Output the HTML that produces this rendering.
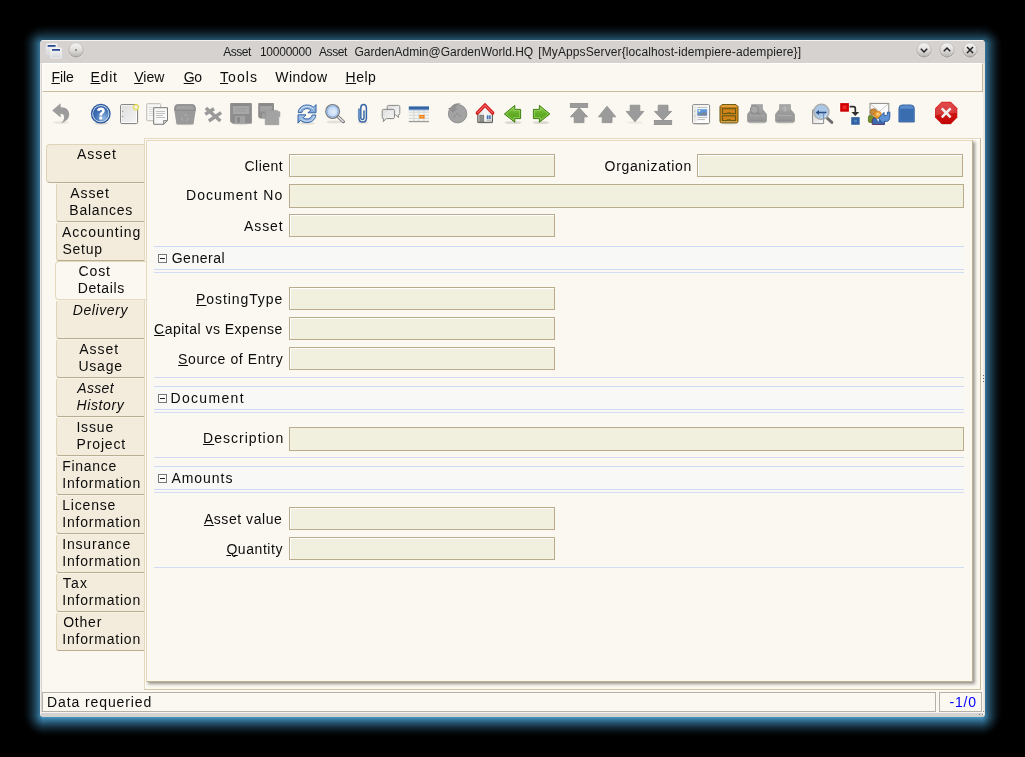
<!DOCTYPE html>
<html><head><meta charset="utf-8">
<style>
*{box-sizing:border-box;margin:0;padding:0}
html,body{width:1025px;height:757px;background:#000;overflow:hidden}
body{position:relative;font-family:"Liberation Sans",sans-serif;font-size:14px;color:#0c0c0c}
.abs{position:absolute}
/* glow */
.g{position:absolute}
#gl{left:22px;top:44px;width:18px;height:669px;background:linear-gradient(to left,rgb(53,117,154) 0px,rgb(48,106,140) 1px,rgb(43,96,126) 2px,rgb(39,86,113) 3px,rgb(35,76,100) 4px,rgb(30,67,89) 5px,rgb(27,59,77) 6px,rgb(23,51,67) 7px,rgb(20,43,57) 8px,rgb(16,36,47) 9px,rgb(13,29,39) 10px,rgb(11,23,31) 11px,rgb(8,18,24) 12px,rgb(6,13,17) 13px,rgb(4,9,12) 14px,rgb(3,6,7) 15px,rgb(1,3,4) 16px,rgb(0,1,1) 17px,rgb(0,0,0) 18px)}
#gr{left:985px;top:44px;width:18px;height:669px;background:linear-gradient(to right,rgb(53,117,154) 0px,rgb(48,106,140) 1px,rgb(43,96,126) 2px,rgb(39,86,113) 3px,rgb(35,76,100) 4px,rgb(30,67,89) 5px,rgb(27,59,77) 6px,rgb(23,51,67) 7px,rgb(20,43,57) 8px,rgb(16,36,47) 9px,rgb(13,29,39) 10px,rgb(11,23,31) 11px,rgb(8,18,24) 12px,rgb(6,13,17) 13px,rgb(4,9,12) 14px,rgb(3,6,7) 15px,rgb(1,3,4) 16px,rgb(0,1,1) 17px,rgb(0,0,0) 18px)}
#gt{left:44px;top:24px;width:937px;height:16px;background:linear-gradient(to top,rgb(37,82,108) 0px,rgb(33,74,97) 1px,rgb(30,66,87) 2px,rgb(27,59,77) 3px,rgb(23,52,68) 4px,rgb(20,45,59) 5px,rgb(17,39,51) 6px,rgb(15,33,43) 7px,rgb(12,27,36) 8px,rgb(10,22,29) 9px,rgb(8,17,22) 10px,rgb(6,13,17) 11px,rgb(4,9,12) 12px,rgb(3,6,7) 13px,rgb(1,3,4) 14px,rgb(0,1,1) 15px,rgb(0,0,0) 16px)}
#gb{left:44px;top:717px;width:937px;height:20px;background:linear-gradient(to bottom,rgb(69,152,200) 0px,rgb(63,139,183) 1px,rgb(58,127,167) 2px,rgb(52,115,152) 3px,rgb(47,104,137) 4px,rgb(42,93,123) 5px,rgb(38,83,109) 6px,rgb(33,73,96) 7px,rgb(29,64,84) 8px,rgb(25,55,72) 9px,rgb(21,47,62) 10px,rgb(18,39,52) 11px,rgb(15,32,42) 12px,rgb(12,26,34) 13px,rgb(9,20,26) 14px,rgb(7,14,19) 15px,rgb(4,10,13) 16px,rgb(3,6,8) 17px,rgb(1,3,4) 18px,rgb(0,1,1) 19px,rgb(0,0,0) 20px)}
#gtl{left:22px;top:24px;width:22px;height:20px;background:conic-gradient(from 270deg at 100% 100%,rgba(0,0,0,0) 0deg,rgba(0,0,0,.3) 90deg,rgba(0,0,0,0) 90deg),radial-gradient(ellipse 22px 20px at 100% 100%,rgb(53,117,154) 0%,rgb(53,117,154) 18.18%,rgb(48,106,140) 22.73%,rgb(43,96,126) 27.27%,rgb(39,86,113) 31.82%,rgb(35,76,100) 36.36%,rgb(30,67,89) 40.91%,rgb(27,59,77) 45.45%,rgb(23,51,67) 50.00%,rgb(20,43,57) 54.55%,rgb(16,36,47) 59.09%,rgb(13,29,39) 63.64%,rgb(11,23,31) 68.18%,rgb(8,18,24) 72.73%,rgb(6,13,17) 77.27%,rgb(4,9,12) 81.82%,rgb(3,6,7) 86.36%,rgb(1,3,4) 90.91%,rgb(0,1,1) 95.45%,rgb(0,0,0) 100.00%)}
#gtr{left:981px;top:24px;width:22px;height:20px;background:conic-gradient(from 0deg at 0% 100%,rgba(0,0,0,.3) 0deg,rgba(0,0,0,0) 90deg),radial-gradient(ellipse 22px 20px at 0% 100%,rgb(53,117,154) 0%,rgb(53,117,154) 18.18%,rgb(48,106,140) 22.73%,rgb(43,96,126) 27.27%,rgb(39,86,113) 31.82%,rgb(35,76,100) 36.36%,rgb(30,67,89) 40.91%,rgb(27,59,77) 45.45%,rgb(23,51,67) 50.00%,rgb(20,43,57) 54.55%,rgb(16,36,47) 59.09%,rgb(13,29,39) 63.64%,rgb(11,23,31) 68.18%,rgb(8,18,24) 72.73%,rgb(6,13,17) 77.27%,rgb(4,9,12) 81.82%,rgb(3,6,7) 86.36%,rgb(1,3,4) 90.91%,rgb(0,1,1) 95.45%,rgb(0,0,0) 100.00%)}
#gbl{left:22px;top:713px;width:22px;height:24px;background:conic-gradient(from 180deg at 100% 0%,rgba(0,0,0,0) 0deg,rgba(0,0,0,.23) 90deg,rgba(0,0,0,0) 90deg),radial-gradient(ellipse 22px 24px at 100% 0%,rgb(68,152,200) 0%,rgb(69,152,200) 18.18%,rgb(63,138,182) 22.73%,rgb(56,125,164) 27.27%,rgb(51,112,147) 31.82%,rgb(45,99,131) 36.36%,rgb(40,87,115) 40.91%,rgb(35,76,100) 45.45%,rgb(30,66,87) 50.00%,rgb(25,56,74) 54.55%,rgb(21,47,62) 59.09%,rgb(17,38,50) 63.64%,rgb(14,31,40) 68.18%,rgb(11,23,31) 72.73%,rgb(8,17,23) 77.27%,rgb(5,12,16) 81.82%,rgb(3,7,10) 86.36%,rgb(2,4,5) 90.91%,rgb(1,1,1) 95.45%,rgb(0,0,0) 100.00%)}
#gbr{left:981px;top:713px;width:22px;height:24px;background:conic-gradient(from 90deg at 0% 0%,rgba(0,0,0,.23) 0deg,rgba(0,0,0,0) 90deg),radial-gradient(ellipse 22px 24px at 0% 0%,rgb(68,152,200) 0%,rgb(69,152,200) 18.18%,rgb(63,138,182) 22.73%,rgb(56,125,164) 27.27%,rgb(51,112,147) 31.82%,rgb(45,99,131) 36.36%,rgb(40,87,115) 40.91%,rgb(35,76,100) 45.45%,rgb(30,66,87) 50.00%,rgb(25,56,74) 54.55%,rgb(21,47,62) 59.09%,rgb(17,38,50) 63.64%,rgb(14,31,40) 68.18%,rgb(11,23,31) 72.73%,rgb(8,17,23) 77.27%,rgb(5,12,16) 81.82%,rgb(3,7,10) 86.36%,rgb(2,4,5) 90.91%,rgb(1,1,1) 95.45%,rgb(0,0,0) 100.00%)}


#win{position:absolute;left:40px;top:40px;width:945px;height:677px;background:linear-gradient(to right,#efedea 0,#efedea 1px,#d6d2cf 1px,#d6d2cf 943px,#efece8 943px,#e4e0dc 945px);border-radius:4px 4px 3px 3px;overflow:hidden}
#title{position:absolute;left:0;top:0;width:945px;height:23px;background:#d6d2cf;border-top:1px solid #f4f2f0}
#content{position:absolute;left:2px;top:23px;width:941px;height:649px;background:#fbf8f1}
#menubar{position:absolute;left:0;top:0;width:941px;height:29px;border-top:1px solid #fff;border-left:1px solid #fff;border-bottom:1px solid #c9bb9b;border-right:1px solid #c4b696}
.t{position:absolute;font-size:14px;line-height:20px;white-space:pre}
.t u{text-decoration:underline;text-decoration-thickness:1px;text-underline-offset:1px}
.fld{position:absolute;height:23px;background:#f1efde;border:1px solid #b9ab8c;box-shadow:inset 1px 1px 0 #fff}
.sec{position:absolute;left:154px;width:810px;height:24px;background:#f8f8f7;border-top:1px solid #cfd9f5;border-bottom:1px solid #cfd9f5}
.ln{position:absolute;left:154px;width:810px;height:1px;background:#d3dcf5}
.box{position:absolute;left:158px;width:9px;height:9px;border:1px solid #777;background:#fdfdfd}
.box:after{content:"";position:absolute;left:1px;top:3px;width:5px;height:1px;background:#222}
.tab{position:absolute;left:56px;width:88px;height:39px;background:#f3ecdc;border-left:1px solid #e0d4b6;border-top:1px solid #f8f2e6;border-bottom:1px solid #b9ad92;border-radius:3px 0 0 3px}
.tab.sel{background:#fbf8f1;left:55px;width:91px;border:1px solid #e3d8bc;border-right:none;border-radius:4px 0 0 4px}
.ic{position:absolute;top:102px;width:24px;height:24px;overflow:visible}
</style></head><body>
<div class="g" id="gl"></div><div class="g" id="gr"></div><div class="g" id="gt"></div><div class="g" id="gb"></div><div class="g" id="gtl"></div><div class="g" id="gtr"></div><div class="g" id="gbl"></div><div class="g" id="gbr"></div>
<div id="win">
 <div id="title"></div>
 <div id="content"><div id="menubar"></div></div>
 <div style="position:absolute;left:1px;top:672px;width:943px;height:1px;background:#f6f4f2"></div>
</div>
<div id="page" class="abs" style="left:0;top:0;width:1025px;height:757px;will-change:transform">
<div class="abs" style="left:144px;top:138px;width:837px;height:552px;border:1px solid #e6d9bd;border-right-color:#c6b999;border-bottom-color:#d2c6a6;box-shadow:inset 1px 1px 0 #fff"></div>
<div class="abs" style="left:983px;top:375px;width:1px;height:1px;background:#666;box-shadow:0 3px 0 #666,0 6px 0 #666"></div>
<div class="abs" style="left:979px;top:714px;width:1px;height:1px;background:#888;box-shadow:3px 0 0 #888,4px -3px 0 #888"></div>
<div class="abs" id="panel" style="left:146px;top:140px;width:827px;height:542px;border:1px solid #e6d9bd;border-right-color:#bdb092;border-bottom-color:#bdb092;background:#fbf8f1;box-shadow:2px 2px 3px rgba(70,68,60,.55)"></div>
<div class="tab" style="left:46px;top:144px;width:98px;height:39px;border-top-color:#e0d4b6;border-radius:4px 0 0 4px"></div>
<div class="tab" style="top:183px"></div>
<div class="tab" style="top:222px"></div>
<div class="tab sel" style="top:261px"></div>
<div class="tab" style="top:300px"></div>
<div class="tab" style="top:339px"></div>
<div class="tab" style="top:378px"></div>
<div class="tab" style="top:417px"></div>
<div class="tab" style="top:456px"></div>
<div class="tab" style="top:495px"></div>
<div class="tab" style="top:534px"></div>
<div class="tab" style="top:573px"></div>
<div class="tab" style="top:612px"></div>
<div class="fld" style="left:289px;top:154px;width:266px"></div>
<div class="fld" style="left:697px;top:154px;width:266px"></div>
<div class="fld" style="left:289px;top:184px;width:675px;height:24px;box-shadow:none"></div>
<div class="fld" style="left:289px;top:214px;width:266px"></div>
<div class="sec" style="top:246px"></div>
<div class="ln" style="top:272px"></div>
<div class="box" style="top:254px"></div>
<div class="fld" style="left:289px;top:287px;width:266px"></div>
<div class="fld" style="left:289px;top:317px;width:266px"></div>
<div class="fld" style="left:289px;top:347px;width:266px"></div>
<div class="ln" style="top:377px"></div>
<div class="sec" style="top:386px"></div>
<div class="ln" style="top:412px"></div>
<div class="box" style="top:394px"></div>
<div class="fld" style="left:289px;top:427px;width:675px;height:24px;box-shadow:none"></div>
<div class="ln" style="top:457px"></div>
<div class="sec" style="top:466px"></div>
<div class="ln" style="top:492px"></div>
<div class="box" style="top:474px"></div>
<div class="fld" style="left:289px;top:507px;width:266px"></div>
<div class="fld" style="left:289px;top:537px;width:266px"></div>
<div class="ln" style="top:567px"></div>
<div class="abs" style="left:42px;top:692px;width:894px;height:20px;border:1px solid #b4b1a9;background:#fbf8f1"></div>
<div class="abs" style="left:939px;top:692px;width:43px;height:20px;border:1px solid #b4b1a9;background:#fbf8f1"></div>

<svg width="0" height="0" style="position:absolute"><defs><linearGradient id="tb" x1="0" y1="0" x2="0" y2="1"><stop offset="0" stop-color="#f6f5f4"/><stop offset=".5" stop-color="#e0dedc"/><stop offset="1" stop-color="#b4b1ae"/></linearGradient>
<linearGradient id="tbs" x1="0" y1="0" x2="0" y2="1"><stop offset="0" stop-color="#c9c6c3"/><stop offset="1" stop-color="#8f8b88"/></linearGradient>
<linearGradient id="aw" x1="0" y1="0" x2="0" y2="1"><stop offset="0" stop-color="#fafafa"/><stop offset="1" stop-color="#d4d6da"/></linearGradient></defs></svg><svg class="abs" style="left:67.4px;top:41.4px;width:18px;height:18px;overflow:visible" viewBox="-9 -9 18 18">
<circle cx="0" cy=".7" r="7.5" fill="#fff" opacity=".5"/>
<circle cx="0" cy="0" r="7.15" fill="url(#tb)" stroke="url(#tbs)" stroke-width=".8"/>
<circle cx="0" cy="0" r=".75" fill="#222"/></svg><svg class="abs" style="left:915.3px;top:41.3px;width:18px;height:18px;overflow:visible" viewBox="-9 -9 18 18">
<circle cx="0" cy=".7" r="7.5" fill="#fff" opacity=".5"/>
<circle cx="0" cy="0" r="7.15" fill="url(#tb)" stroke="url(#tbs)" stroke-width=".8"/>
<path d="M-3.2 -1.2 L0 2 L3.2 -1.2" fill="none" stroke="#222" stroke-width="1.5"/></svg><svg class="abs" style="left:938.4px;top:41.3px;width:18px;height:18px;overflow:visible" viewBox="-9 -9 18 18">
<circle cx="0" cy=".7" r="7.5" fill="#fff" opacity=".5"/>
<circle cx="0" cy="0" r="7.15" fill="url(#tb)" stroke="url(#tbs)" stroke-width=".8"/>
<path d="M-3.2 1.2 L0 -2 L3.2 1.2" fill="none" stroke="#222" stroke-width="1.5"/></svg><svg class="abs" style="left:961.4px;top:41.3px;width:18px;height:18px;overflow:visible" viewBox="-9 -9 18 18">
<circle cx="0" cy=".7" r="7.5" fill="#fff" opacity=".5"/>
<circle cx="0" cy="0" r="7.15" fill="url(#tb)" stroke="url(#tbs)" stroke-width=".8"/>
<path d="M-3 -3 L3 3 M3 -3 L-3 3" fill="none" stroke="#222" stroke-width="1.5"/></svg><svg class="abs" style="left:45px;top:43px;width:18px;height:16px" viewBox="0 0 18 16">
<rect x="1.3" y=".8" width="11" height="10.4" rx="1" fill="url(#aw)" stroke="#e8e8e8" stroke-width=".8"/>
<rect x="2.6" y="2" width="8" height="1.8" fill="#2c4c94"/>
<rect x="5.7" y="4.8" width="10.6" height="10.4" rx="1" fill="url(#aw)" stroke="#f0f0f0" stroke-width=".9"/>
<rect x="7" y="6" width="8" height="1.8" fill="#2c4c94"/>
</svg>
<svg class="ic" style="left:49px" viewBox="0 0 24 24"><ellipse cx="12" cy="20.5" rx="8" ry="1.6" fill="#000" opacity=".06"/>
<path d="M3.2 8.6 L11.6 1.2 L11.6 5.4 C16.8 5 20.4 8.2 20.2 12.8 C20 17 16.6 19.9 11.8 21.4 C14.4 19.2 15.6 16.6 15 14.2 C14.5 12.3 13.3 11.6 11.6 11.7 L11.6 15.6 Z" fill="#9c9c9c"/></svg>
<svg class="ic" style="left:89px" viewBox="0 0 24 24"><defs><radialGradient id="hg" cx=".7" cy=".8" r=".9"><stop offset="0" stop-color="#8fb6e2"/><stop offset=".6" stop-color="#3f70b4"/><stop offset="1" stop-color="#2f5ea6"/></radialGradient></defs><ellipse cx="12" cy="21.3" rx="7" ry="1.2" fill="#000" opacity=".15"/>
<circle cx="11.8" cy="11.7" r="9.9" fill="#2c5aa0"/>
<circle cx="11.8" cy="11.7" r="8.5" fill="#f4f7fb"/>
<circle cx="11.8" cy="11.7" r="7.8" fill="url(#hg)"/>
<path d="M8 8.6 C8 4.6 15.8 4.4 15.8 8.6 C15.8 11.2 13.2 11.4 13.2 13.4 L10.4 13.4 C10.4 10.6 13 10.4 13 8.8 C13 7.6 10.8 7.6 10.8 9 Z M10.4 14.6 H13.2 V17.4 H10.4 Z" fill="#fff"/></svg>
<svg class="ic" style="left:117px" viewBox="0 0 24 24"><defs><linearGradient id="ng" x1="0" y1="0" x2="1" y2="1"><stop offset="0" stop-color="#dedede"/><stop offset="1" stop-color="#f4f4f4"/></linearGradient></defs><rect x="3.6" y="2.6" width="17" height="19" rx="1.2" fill="#fff" stroke="#7b7b78" stroke-width="1"/>
<rect x="5" y="4" width="14.2" height="16.2" fill="url(#ng)"/>
<circle cx="5.6" cy="9.4" r=".7" fill="#9a9a98"/><circle cx="5.6" cy="14.4" r=".7" fill="#9a9a98"/>
<circle cx="19" cy="5.3" r="2.5" fill="#f4f4ea" fill-opacity=".8" stroke="#e8dc4e" stroke-opacity=".85" stroke-width="1.4"/></svg>
<svg class="ic" style="left:145px" viewBox="0 0 24 24"><rect x="1.7" y="1.7" width="14" height="17" rx=".8" fill="#f6f6f4" stroke="#bcbcb8" stroke-width="1"/>
<path d="M4 5.5h9M4 7.5h9M4 9.5h9M4 11.5h9M4 13.5h5" stroke="#dcdcda" stroke-width="1"/>
<path d="M8.7 5.7 H22.5 V18.5 L18.5 22.3 H8.7 Z" fill="#f8f8f8" stroke="#7a7a78" stroke-width="1" stroke-linejoin="round"/>
<path d="M11 9.5h9M11 11.5h9M11 13.5h7M11 15.5h9" stroke="#c2c2c0" stroke-width="1"/>
<path d="M22.5 18.5 H18.5 V22.3 Z" fill="#d0d0ce" stroke="#7a7a78" stroke-width=".8" stroke-linejoin="round"/></svg>
<svg class="ic" style="left:173px" viewBox="0 0 24 24"><ellipse cx="12" cy="22.3" rx="9.5" ry="1" fill="#000" opacity=".08"/>
<path d="M1.2 7.4 Q1 2.2 5.4 2.2 H18.6 Q23 2.2 22.8 7.4 L20.7 21.2 Q20.5 22.5 19.2 22.5 H4.8 Q3.5 22.5 3.3 21.2 Z" fill="#9a9a9a"/>
<path d="M1.3 7.6 Q1.1 2.2 5.4 2.2 H18.6 Q22.9 2.2 22.7 7.6 L22.5 9 H1.5 Z" fill="#8e8e8e"/>
<path d="M3 7.6 Q3 3.8 5.6 3.8 H18.4 Q21 3.8 21 7.6 Z" fill="#a2a2a2"/>
<circle cx="12" cy="15.8" r="3.1" fill="none" stroke="#a9a9a9" stroke-width="1.3" stroke-dasharray="4.2 2.3"/></svg>
<svg class="ic" style="left:201px" viewBox="0 0 24 24"><path d="M4.9 5.9 L19.4 18.9 M13 6.7 L4.2 12.3 M20.2 10.7 L7.8 19" stroke="#9a9a9a" stroke-width="3.4" stroke-linecap="butt" fill="none"/></svg>
<svg class="ic" style="left:229px" viewBox="0 0 24 24"><ellipse cx="12" cy="22.2" rx="7" ry="1" fill="#000" opacity=".08"/>
<path d="M2.2 1 H21.8 Q22.9 1 22.9 2.1 V20.7 Q22.9 21.8 21.8 21.8 H3.6 L1.1 19.4 V2.1 Q1.1 1 2.2 1 Z" fill="#8d8d8d"/>
<rect x="3.9" y="3.6" width="16.3" height="8.4" fill="#a6a6a6"/>
<path d="M3.9 3.3h16.3" stroke="#848484" stroke-width="1"/>
<path d="M6.5 6.5h11M6.5 9h11" stroke="#9c9c9c" stroke-width="1"/>
<rect x="6.1" y="14" width="10" height="7.8" fill="#a2a2a2"/>
<rect x="8.3" y="15.2" width="2.5" height="5.4" fill="#858585"/></svg>
<svg class="ic" style="left:257px" viewBox="0 0 24 24"><path d="M2 1 H16.2 Q17 1 17 1.8 V16.6 H3 L1.2 15 V1.8 Q1.2 1 2 1 Z" fill="#8d8d8d"/>
<rect x="3.2" y="3.6" width="11.6" height="6" fill="#a3a3a3"/>
<path d="M3.2 3.2h11.6" stroke="#838383" stroke-width="1"/>
<rect x="5" y="11.5" width="4" height="5" fill="#a0a0a0"/>
<path d="M8.2 8.4 H20.3 L21.8 9.8 H22.9 V14.6 H21.8 V22.7 H8.2 Z" fill="#a3a3a3" stroke="#969696" stroke-width=".6"/></svg>
<svg class="ic" style="left:295px" viewBox="0 0 24 24"><defs><linearGradient id="rf" x1="0" y1="0" x2="0" y2="1"><stop offset="0" stop-color="#a5c2e7"/><stop offset="1" stop-color="#7ea5d8"/></linearGradient></defs><ellipse cx="12" cy="21.3" rx="8" ry="1.2" fill="#000" opacity=".1"/>
<path d="M3.2 10.6 C3.6 5.6 8 2.8 12.6 3 C15 3.1 17 4 18.6 5.2 L21 2.6 V10.8 H13 L15.8 8 C14.6 7 13.4 6.6 12 6.6 C9.6 6.6 7.6 8 6.8 10.6 Z" fill="url(#rf)" stroke="#3465a4" stroke-width="1" stroke-linejoin="round"/>
<path d="M20.8 13 C20.4 18 16 20.8 11.4 20.6 C9 20.5 7 19.6 5.4 18.4 L3 21.2 V12.8 H11 L8.2 15.6 C9.4 16.6 10.6 17 12 17 C14.4 17 16.4 15.6 17.2 13 Z" fill="url(#rf)" stroke="#3465a4" stroke-width="1" stroke-linejoin="round"/>
<path d="M4.6 9.6 C5.4 6.4 8.6 4.2 12.4 4.4 C14.6 4.5 16.6 5.4 18.4 7 M19.4 14 C18.6 17.2 15.4 19.4 11.6 19.2 C9.4 19.1 7.4 18.2 5.6 16.6" fill="none" stroke="#d6e4f5" stroke-width=".9"/></svg>
<svg class="ic" style="left:323px" viewBox="0 0 24 24"><defs><radialGradient id="fg" cx=".6" cy=".55" r=".7"><stop offset="0" stop-color="#e4eefa"/><stop offset="1" stop-color="#b4cff0"/></radialGradient></defs><ellipse cx="11" cy="20" rx="7.5" ry="1.6" fill="#000" opacity=".09"/>
<path d="M14.6 14.4 L20.3 19.6" stroke="#6f6f6f" stroke-width="3.3" stroke-linecap="round"/>
<path d="M15 14.8 L20.1 19.4" stroke="#e6e6e6" stroke-width="1.5" stroke-linecap="round"/>
<circle cx="9.6" cy="9.4" r="6.9" fill="#c3d8f1" stroke="#7a7a7a" stroke-width="1.2"/>
<circle cx="9.6" cy="9.4" r="5.5" fill="url(#fg)" stroke="#7daae6" stroke-width=".9"/></svg>
<svg class="ic" style="left:351px" viewBox="0 0 24 24"><ellipse cx="12" cy="20.8" rx="6" ry=".8" fill="#000" opacity=".12"/>
<path d="M8 7 V16.5 Q8 20 11.6 20 Q15.4 20 15.4 16.5 V6 Q15.4 2.6 12.6 2.6 Q9.8 2.6 9.8 6 V15.6 Q9.8 17.6 11.4 17.6 Q13 17.6 13 15.6 V9" fill="none" stroke="#3a68a8" stroke-width="1.5" stroke-linecap="round"/>
<path d="M8 8 V16" stroke="#6c93c8" stroke-width="2.2"/></svg>
<svg class="ic" style="left:379px" viewBox="0 0 24 24"><defs><linearGradient id="cg" x1="0" y1="0" x2="1" y2="1"><stop offset="0" stop-color="#dcdcdc"/><stop offset="1" stop-color="#fafafa"/></linearGradient></defs><path d="M9.4 3.4 H19.6 Q20.8 3.4 20.8 4.6 V11.6 Q20.8 12.8 19.6 12.8 H19 L19.6 15.6 L16.6 12.8 H9.4 Q8.2 12.8 8.2 11.6 V4.6 Q8.2 3.4 9.4 3.4 Z" fill="url(#cg)" stroke="#8a8a88" stroke-width="1" stroke-linejoin="round"/>
<path d="M4.4 7.4 H14.2 Q15.4 7.4 15.4 8.6 V15.4 Q15.4 16.6 14.2 16.6 H7.4 L4.2 19.6 L4.8 16.6 H4.4 Q3.2 16.6 3.2 15.4 V8.6 Q3.2 7.4 4.4 7.4 Z" fill="url(#cg)" stroke="#858583" stroke-width="1" stroke-linejoin="round"/></svg>
<svg class="ic" style="left:407px" viewBox="0 0 24 24"><rect x="1.8" y="4.6" width="20.2" height="15.2" fill="#f6f6f4"/>
<path d="M1.8 10.2h20.2M1.8 13.2h20.2M1.8 16.4h20.2M6.9 8v11.5M11.9 8v11.5M17 8v11.5" stroke="#d2d2ce" stroke-width=".9"/>
<rect x="1.8" y="4.4" width="20.2" height="3.4" fill="#3465a4"/>
<rect x="1.8" y="7.6" width="20.2" height=".8" fill="#8fb0dc"/>
<rect x="1.8" y="18.9" width="20.2" height="1.3" fill="#9a9a96"/>
<rect x="12.2" y="13" width="5.4" height="3.4" rx="1" fill="#f57900"/>
<rect x="13.4" y="14.2" width="3" height="1" fill="#fcc98a"/></svg>
<svg class="ic" style="left:445px" viewBox="0 0 24 24"><circle cx="12.6" cy="11.7" r="9.2" fill="#a3a3a3" stroke="#8f8f8f" stroke-width="1"/>
<path d="M2.8 6 L6.4 6.3 C6.6 3.4 9 1.5 13 1.3 L16 1.5 C12.8 2.4 10.8 3.8 10.6 6.4 L13 6.6 L7.8 10.8 Z" fill="#919191"/>
<path d="M8 15.5 L12.4 11.3 L16.1 14.8" fill="none" stroke="#8a8a8a" stroke-width="1"/></svg>
<svg class="ic" style="left:473px" viewBox="0 0 24 24"><defs><linearGradient id="hm" x1="0" y1="0" x2="1" y2="0"><stop offset="0" stop-color="#d8d8d6"/><stop offset=".5" stop-color="#f8f8f8"/><stop offset="1" stop-color="#e2e2e0"/></linearGradient></defs><ellipse cx="12" cy="20.8" rx="8.5" ry="1" fill="#000" opacity=".12"/>
<path d="M4.8 11 L12 4.4 L19.4 11 V20.3 H4.8 Z" fill="url(#hm)" stroke="#4c4e4a" stroke-width="1" stroke-linejoin="round"/>
<rect x="6.8" y="13.2" width="4" height="6.6" fill="#8d8f8a" stroke="#6a6c68" stroke-width=".6"/>
<rect x="13.4" y="13" width="4.6" height="4.4" fill="#3b6cb4" stroke="#eeeeec" stroke-width=".7"/>
<path d="M15.7 13v4.4" stroke="#dfe8f4" stroke-width=".7"/>
<path d="M13.4 18.3h4.6" stroke="#a8a8a4" stroke-width=".8"/>
<path d="M4.3 11 L12 3.1 L19.7 11" fill="none" stroke="#d41616" stroke-width="3.3" stroke-linecap="round" stroke-linejoin="miter"/>
<path d="M4.6 10.7 L12 3.2 L19.4 10.7" fill="none" stroke="#f57272" stroke-width="1.1" stroke-linecap="round"/></svg>
<svg class="ic" style="left:501px" viewBox="0 0 24 24"><defs><linearGradient id="gr1" x1="0" y1="0" x2="0" y2="1"><stop offset="0" stop-color="#8fd04e"/><stop offset=".5" stop-color="#62ad26"/><stop offset="1" stop-color="#56a01e"/></linearGradient></defs><ellipse cx="12" cy="20.6" rx="8.5" ry="1.5" fill="#000" opacity=".13"/>
<path d="M3.4 12 L13.8 3.4 V7.4 H19.6 V16.6 H13.8 V20.2 Z" fill="url(#gr1)" stroke="#3c7d12" stroke-width="1" stroke-linejoin="round"/>
<path d="M5 12 L12.8 5.6 V8.4 H18.6 V15.6 H12.8 V18.2 Z" fill="none" stroke="#a6dc6a" stroke-width=".8" opacity=".8"/></svg>
<svg class="ic" style="left:529px" viewBox="0 0 24 24"><ellipse cx="12" cy="20.6" rx="8.5" ry="1.5" fill="#000" opacity=".13"/>
<path d="M20.8 12 L10.4 3.4 V7.4 H4.4 V16.6 H10.4 V20.2 Z" fill="url(#gr1)" stroke="#3c7d12" stroke-width="1" stroke-linejoin="round"/>
<path d="M19.2 12 L11.4 5.6 V8.4 H5.4 V15.6 H11.4 V18.2 Z" fill="none" stroke="#a6dc6a" stroke-width=".8" opacity=".8"/></svg>
<svg class="ic" style="left:567px" viewBox="0 0 24 24"><ellipse cx="12" cy="21" rx="7" ry="1" fill="#000" opacity=".06"/><rect x="3.3" y="1.4" width="17.4" height="4" fill="#9b9b9b" stroke="#8d8d8d" stroke-width=".8"/><path d="M12 5.6 L20.6 14.8 H17 V20.4 H7.2 V14.8 H3.4 Z" fill="#9b9b9b" stroke="#8d8d8d" stroke-width=".8"/></svg>
<svg class="ic" style="left:595px" viewBox="0 0 24 24"><ellipse cx="12" cy="21" rx="7" ry="1" fill="#000" opacity=".06"/><path d="M12 4.2 L20.8 14.8 H17 V20.4 H7.2 V14.8 H3.4 Z" fill="#9b9b9b" stroke="#8d8d8d" stroke-width=".8"/></svg>
<svg class="ic" style="left:623px" viewBox="0 0 24 24"><ellipse cx="12" cy="20.6" rx="8" ry="1.2" fill="#000" opacity=".06"/><path d="M12 19.8 L20.8 9.4 H16.8 V3.2 H7.2 V9.4 H3.2 Z" fill="#9b9b9b" stroke="#8d8d8d" stroke-width=".8"/></svg>
<svg class="ic" style="left:651px" viewBox="0 0 24 24"><path d="M12 18.2 L20.6 9.4 H17 V3.2 H7.2 V9.4 H3.4 Z" fill="#9b9b9b" stroke="#8d8d8d" stroke-width=".8"/><rect x="3.3" y="18.4" width="17.4" height="4.2" fill="#9b9b9b" stroke="#8d8d8d" stroke-width=".8"/></svg>
<svg class="ic" style="left:689px" viewBox="0 0 24 24"><ellipse cx="12" cy="22" rx="8" ry=".9" fill="#000" opacity=".12"/>
<rect x="3.6" y="2.6" width="17" height="19" rx="1.2" fill="#fdfdfd" stroke="#878785" stroke-width="1"/>
<rect x="5" y="4" width="2.6" height="16.2" fill="#e8e8e6"/>
<circle cx="5.7" cy="9" r=".6" fill="#999"/><circle cx="5.7" cy="14" r=".6" fill="#999"/>
<path d="M8.4 5.4h9.8M8.4 15.4h9.8M8.4 17.6h7.6" stroke="#b9b9b7" stroke-width="1"/>
<rect x="8.4" y="7.2" width="9.6" height="6.4" fill="#5b97db" stroke="#7fb0e8" stroke-width=".5"/>
<path d="M8.6 13.4 V11.6 L11 11.4 L13.8 11 L15.6 9.2 L16.6 11 L17.8 10.6 V13.4 Z" fill="#7b8794"/>
<circle cx="10.4" cy="8.8" r="1" fill="#fdf6c0"/></svg>
<svg class="ic" style="left:717px" viewBox="0 0 24 24"><ellipse cx="12" cy="21.6" rx="8.5" ry="1" fill="#000" opacity=".15"/>
<path d="M5 2.6 H19 L21 4.6 V19.2 Q21 20.8 19.4 20.8 H4.6 Q3 20.8 3 19.2 V4.6 Z" fill="#d4871a" stroke="#62540f" stroke-width="1" stroke-linejoin="round"/>
<path d="M5.2 3.4 H18.8 L20.1 4.8 H3.9 Z" fill="#eeb353"/>
<path d="M3.9 5.4 H20.1" stroke="#b56f10" stroke-width=".8"/>
<path d="M3.9 19.7 H20.1" stroke="#efc070" stroke-width=".9"/>
<rect x="5.5" y="6.7" width="13" height="4.9" fill="#d2841a" stroke="#665712" stroke-width="1.1"/>
<rect x="5.5" y="13.8" width="13" height="4.8" fill="#d2841a" stroke="#665712" stroke-width="1.1"/>
<rect x="10" y="10.2" width="4" height="1.4" fill="#7d6512"/>
<rect x="10" y="17.2" width="4" height="1.4" fill="#7d6512"/></svg>
<svg class="ic" style="left:745px" viewBox="0 0 24 24"><ellipse cx="12" cy="21.4" rx="8" ry="1" fill="#000" opacity=".07"/>
<path d="M6.2 2.2 H17.8 V7.2 L21.4 11.4 Q21.9 12 21.9 12.8 V18.6 Q21.9 20.8 19.7 20.8 H4.3 Q2.1 20.8 2.1 18.6 V12.8 Q2.1 12 2.6 11.4 L6.2 7.2 Z" fill="#9a9a9a"/>
<rect x="7" y="3" width="10" height="6.4" fill="#a5a5a5"/>
<path d="M4.6 13.6 H19.4" stroke="#aaaaaa" stroke-width="1.2" stroke-dasharray="3 1"/>
<path d="M4.4 18.2 H19.6" stroke="#8c8c8c" stroke-width="1"/>
<circle cx="9.4" cy="7.6" r="3.9" fill="#a8a8a8" stroke="#8c8c8c" stroke-width="1.2"/>
<path d="M12.2 10.4 L14.8 12.8" stroke="#8c8c8c" stroke-width="1.6"/></svg>
<svg class="ic" style="left:773px" viewBox="0 0 24 24"><ellipse cx="12" cy="21.4" rx="8" ry="1" fill="#000" opacity=".07"/>
<path d="M6.2 2.2 H17.8 V7.2 L21.4 11.4 Q21.9 12 21.9 12.8 V18.6 Q21.9 20.8 19.7 20.8 H4.3 Q2.1 20.8 2.1 18.6 V12.8 Q2.1 12 2.6 11.4 L6.2 7.2 Z" fill="#9a9a9a"/>
<rect x="7" y="3" width="10" height="6.4" fill="#a5a5a5"/>
<path d="M12 3.8 L15 7 H13 V9.4 H11 V7 H9 Z" fill="#b4b4b4"/>
<path d="M4.6 13.6 H19.4" stroke="#aaaaaa" stroke-width="1.2"/>
<path d="M4.4 18.2 H19.6" stroke="#8c8c8c" stroke-width="1"/></svg>
<svg class="ic" style="left:811px" viewBox="0 0 24 24"><defs><linearGradient id="zp" x1="0" y1="0" x2="1" y2="1"><stop offset="0" stop-color="#d4d4d2"/><stop offset="1" stop-color="#fbfbfb"/></linearGradient></defs><path d="M1.6 8.2 Q1.6 7.6 2.2 7.6 H12.6 V21.6 H1.6 Z" fill="url(#zp)" stroke="#8a8a88" stroke-width="1"/>
<path d="M16 16 L20.8 20.4" stroke="#6e6e6e" stroke-width="3" stroke-linecap="round"/>
<circle cx="10.4" cy="9.8" r="7.6" fill="#abc7e7" stroke="#adadab" stroke-width="1.4"/>
<path d="M10 15.5 A 6.5 6.5 0 0 0 16.5 11" fill="none" stroke="#d4e2f4" stroke-width="1.2" opacity=".8"/>
<path d="M4.6 10.5 L8 8 V9.8 H15.4 V11.2 H8 V13 Z" fill="#2b4c80"/>
<path d="M12.6 10.6 V17" stroke="#5a7cae" stroke-width=".8"/></svg>
<svg class="ic" style="left:839px" viewBox="0 0 24 24"><rect x=".6" y=".6" width="9.8" height="9.6" fill="#fff"/>
<rect x="1.2" y="1.1" width="8.7" height="8.6" fill="#cc0000"/>
<rect x="3.4" y="3.3" width="4.3" height="4.2" fill="#ef2929" stroke="#e01010" stroke-width=".8"/>
<rect x="11.6" y="14.6" width="9.6" height="8.8" fill="#fff"/>
<rect x="12.2" y="15.1" width="8.5" height="7.7" fill="#3465a4"/>
<rect x="14.4" y="17.2" width="4.1" height="3.6" fill="#4f83c6" stroke="#2f5c98" stroke-width=".8"/>
<path d="M10.6 4.6 H14.4 Q16.3 4.6 16.3 6.6 V10.4" fill="none" stroke="#2e2e2e" stroke-width="1.7"/>
<path d="M12.4 10 H20.2 L16.3 14 Z" fill="#2e2e2e"/></svg>
<svg class="ic" style="left:867px" viewBox="0 0 24 24"><rect x="3" y="1.4" width="18.8" height="14" fill="#fbfbfb" stroke="#8a8a88" stroke-width="1"/>
<path d="M3.4 1.8 L12.4 9.6 L21.4 1.8" fill="none" stroke="#c8c8c6" stroke-width="1"/>
<path d="M1.4 15 Q1.4 13.4 3.4 13.4 Q6.4 13.4 6.8 15.4 V20.4 H2.6 Q1.4 20.4 1.4 19 Z" fill="#73902c" stroke="#4e6a12" stroke-width=".7"/>
<circle cx="6.5" cy="10" r="3.3" fill="#c98a3c" stroke="#9a6420" stroke-width=".7"/>
<path d="M5.2 22.4 V18.8 Q5.2 15.6 9 15.6 H13.6 Q17.4 15.6 17.4 18.8 V22.4 Z" fill="#3c6cb0" stroke="#5c3566" stroke-width="1"/>
<path d="M9.6 15.8 L11.2 19.8 L12.8 15.8" fill="#fff"/>
<circle cx="10.8" cy="12.8" r="3.6" fill="#f0a030" stroke="#d07818" stroke-width=".7"/>
<circle cx="11" cy="12.2" r="1.7" fill="#f8c878"/>
<path d="M11.4 16.4 L17 10.4 V13.4 H19.4 Q20.4 13.4 20.4 12.4 V10.2 H22.8 V14 Q22.8 19.4 19.4 19.4 H17 V22.4 Z" fill="#5c91d4" stroke="#2c5c9c" stroke-width="1" stroke-linejoin="round"/></svg>
<svg class="ic" style="left:895px" viewBox="0 0 24 24"><ellipse cx="11.6" cy="20.2" rx="8.5" ry=".9" fill="#000" opacity=".12"/>
<path d="M3.9 19.9 V6.4 Q3.9 2.9 7.4 2.9 H15.8 Q19.3 2.9 19.3 6.4 V19.9 Z" fill="#3a6cb0" stroke="#2f5e9e" stroke-width=".8"/>
<path d="M4.6 6.8 Q4.6 3.6 7.6 3.6 H15.6 Q18.6 3.6 18.6 6.8 Z" fill="#5b8bcb"/>
<path d="M4.8 7.4 V19.2 M18.4 7.4 V19.2 M4.8 19.2 H18.4" stroke="#4d7ec0" stroke-width=".7" fill="none"/></svg>
<svg class="ic" style="left:933px" viewBox="0 0 24 24"><defs><linearGradient id="ex" x1="0" y1="0" x2="0" y2="1"><stop offset="0" stop-color="#dc2a2a"/><stop offset="1" stop-color="#c40202"/></linearGradient></defs><ellipse cx="13.2" cy="22" rx="6" ry=".8" fill="#000" opacity=".18"/>
<path d="M8.6 -.2 H17.8 L24.3 6.3 V15.5 L17.8 22 H8.6 L2.1 15.5 V6.3 Z" fill="url(#ex)"/>
<path d="M8.9 .7 H17.5 L23.5 6.7 V11 Q14 10.6 2.9 13.6 V6.7 Z" fill="#fff" opacity=".16"/>
<path d="M8.8 6.4 L17.6 15.4 M17.6 6.4 L8.8 15.4" stroke="#f0f0ee" stroke-width="2.6"/></svg>

<div class="t" style="left:223.20px;top:42.24px;letter-spacing:-0.444px;font-size:12px;color:#1c1c1c">Asset</div>
<div class="t" style="left:259.90px;top:42.24px;letter-spacing:-0.231px;font-size:12px;color:#1c1c1c">10000000</div>
<div class="t" style="left:319.00px;top:42.24px;letter-spacing:-0.419px;font-size:12px;color:#1c1c1c">Asset</div>
<div class="t" style="left:354.50px;top:42.24px;letter-spacing:-0.003px;font-size:12px;color:#1c1c1c">GardenAdmin@GardenWorld.HQ</div>
<div class="t" style="left:538.30px;top:42.24px;letter-spacing:0.105px;font-size:12px;color:#1c1c1c">[MyAppsServer{localhost-idempiere-adempiere}]</div>
<div class="t" style="left:51.40px;top:66.75px;letter-spacing:-0.057px"><u>F</u>ile</div>
<div class="t" style="left:90.50px;top:66.75px;letter-spacing:0.755px"><u>E</u>dit</div>
<div class="t" style="left:134.20px;top:66.75px;letter-spacing:0.040px"><u>V</u>iew</div>
<div class="t" style="left:183.70px;top:66.75px;letter-spacing:-0.390px"><u>G</u>o</div>
<div class="t" style="left:220.00px;top:66.75px;letter-spacing:1.079px"><u>T</u>ools</div>
<div class="t" style="left:275.30px;top:66.75px;letter-spacing:0.403px">Window</div>
<div class="t" style="left:345.60px;top:66.75px;letter-spacing:0.464px"><u>H</u>elp</div>
<div class="t" style="left:77.00px;top:144.15px;letter-spacing:0.969px">Asset</div>
<div class="t" style="left:70.30px;top:182.95px;letter-spacing:0.894px">Asset</div>
<div class="t" style="left:69.30px;top:199.95px;letter-spacing:0.772px">Balances</div>
<div class="t" style="left:61.90px;top:221.95px;letter-spacing:1.024px">Accounting</div>
<div class="t" style="left:62.40px;top:238.75px;letter-spacing:0.775px">Setup</div>
<div class="t" style="left:78.50px;top:260.95px;letter-spacing:0.901px">Cost</div>
<div class="t" style="left:77.70px;top:277.75px;letter-spacing:0.618px">Details</div>
<div class="t" style="left:72.70px;top:299.95px;letter-spacing:0.605px;font-style:italic">Delivery</div>
<div class="t" style="left:79.20px;top:338.95px;letter-spacing:0.969px">Asset</div>
<div class="t" style="left:78.50px;top:355.75px;letter-spacing:0.754px">Usage</div>
<div class="t" style="left:77.30px;top:377.95px;letter-spacing:0.319px;font-style:italic">Asset</div>
<div class="t" style="left:76.50px;top:394.95px;letter-spacing:0.607px;font-style:italic">History</div>
<div class="t" style="left:76.40px;top:416.95px;letter-spacing:0.831px">Issue</div>
<div class="t" style="left:76.60px;top:433.75px;letter-spacing:0.836px">Project</div>
<div class="t" style="left:62.30px;top:455.95px;letter-spacing:0.680px">Finance</div>
<div class="t" style="left:62.30px;top:472.95px;letter-spacing:0.785px">Information</div>
<div class="t" style="left:62.30px;top:494.95px;letter-spacing:0.789px">License</div>
<div class="t" style="left:62.30px;top:511.95px;letter-spacing:0.785px">Information</div>
<div class="t" style="left:62.20px;top:533.95px;letter-spacing:0.813px">Insurance</div>
<div class="t" style="left:62.30px;top:550.95px;letter-spacing:0.785px">Information</div>
<div class="t" style="left:62.80px;top:572.95px;letter-spacing:1.207px">Tax</div>
<div class="t" style="left:62.30px;top:589.95px;letter-spacing:0.785px">Information</div>
<div class="t" style="left:63.20px;top:611.95px;letter-spacing:0.787px">Other</div>
<div class="t" style="left:62.30px;top:628.95px;letter-spacing:0.785px">Information</div>
<div class="t" style="left:244.50px;top:156.15px;letter-spacing:0.459px">Client</div>
<div class="t" style="left:604.60px;top:156.15px;letter-spacing:0.664px">Organization</div>
<div class="t" style="left:186.00px;top:185.45px;letter-spacing:1.069px">Document No</div>
<div class="t" style="left:244.00px;top:216.15px;letter-spacing:0.894px">Asset</div>
<div class="t" style="left:171.70px;top:247.65px;letter-spacing:0.534px">General</div>
<div class="t" style="left:196.10px;top:288.85px;letter-spacing:0.904px"><u>P</u>ostingType</div>
<div class="t" style="left:154.10px;top:318.85px;letter-spacing:0.485px"><u>C</u>apital vs Expense</div>
<div class="t" style="left:178.10px;top:348.85px;letter-spacing:0.586px"><u>S</u>ource of Entry</div>
<div class="t" style="left:170.50px;top:387.65px;letter-spacing:1.326px">Document</div>
<div class="t" style="left:203.10px;top:428.15px;letter-spacing:1.016px"><u>D</u>escription</div>
<div class="t" style="left:171.40px;top:468.15px;letter-spacing:0.959px">Amounts</div>
<div class="t" style="left:203.90px;top:508.85px;letter-spacing:0.551px"><u>A</u>sset value</div>
<div class="t" style="left:226.40px;top:538.65px;letter-spacing:0.566px"><u>Q</u>uantity</div>
<div class="t" style="left:47.10px;top:692.35px;letter-spacing:0.890px">Data requeried</div>
<div class="t" style="left:949.60px;top:692.35px;letter-spacing:0.787px;color:#0000ff">-1/0</div>
</div>
</body></html>
